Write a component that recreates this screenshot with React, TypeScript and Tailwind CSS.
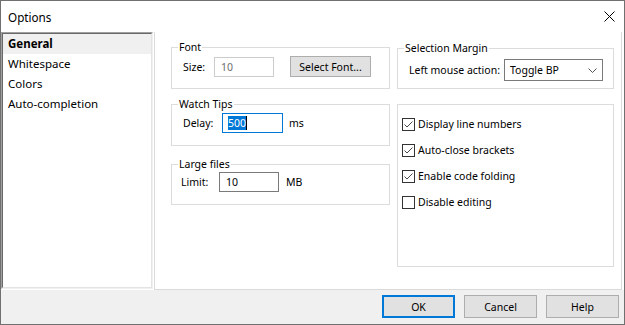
import React from 'react';

const GroupBox: React.FC<{ label?: string; className?: string; children?: React.ReactNode }> = ({ label, className, children }) => (
  <fieldset className={`border border-[#dcdcdc] m-0 p-0 ${className ?? ''}`}>
    {label && <legend className="ml-[6px] px-[1px] leading-[16px]">{label}</legend>}
    {children}
  </fieldset>
);

const Check: React.FC<{ checked?: boolean; label: string }> = ({ checked, label }) => (
  <div className="flex items-center h-[16px]">
    <div className="w-[13px] h-[13px] border border-[#333333] bg-white flex items-center justify-center shrink-0">
      {checked && (
        <svg width="11" height="11" viewBox="0 0 11 11">
          <path d="M1.5 5.5 L4 8 L9.5 2.5" fill="none" stroke="#4a4a4a" strokeWidth="1" />
        </svg>
      )}
    </div>
    <span className="ml-[3px] whitespace-nowrap">{label}</span>
  </div>
);

const Button: React.FC<{ label: string; primary?: boolean }> = ({ label, primary }) => (
  <button
    className={`w-[73px] h-[23px] bg-[#e1e1e1] flex items-center justify-center ${
      primary ? 'border-2 border-[#0078d7]' : 'border border-[#adadad]'
    }`}
  >
    {label}
  </button>
);

export default function App() {
  const items = ['General', 'Whitespace', 'Colors', 'Auto-completion'];

  return (
    <div className="w-[625px] h-[325px] border border-[#707070] bg-white flex flex-col text-[10.5px] text-black font-['Noto_Sans',sans-serif] leading-[16px]">
      {/* title bar */}
      <div className="h-[31px] flex items-center justify-between pl-[7px] pr-[9px] shrink-0">
        <span className="text-[11.7px]">Options</span>
        <svg width="11" height="11" viewBox="0 0 11 11">
          <path d="M0.5 0.5 L10.5 10.5 M10.5 0.5 L0.5 10.5" stroke="#000" strokeWidth="1" />
        </svg>
      </div>

      {/* main area */}
      <div className="h-[258px] flex shrink-0">
        <div className="w-[152px] h-[257px] mr-[1px] border-t border-l border-[#a0a0a0] border-r border-b border-r-[#f0f0f0] border-b-[#f0f0f0]">
          <div className="h-full border-t border-l border-[#696969] border-r border-b border-r-[#e3e3e3] border-b-[#e3e3e3] bg-white text-[11.5px]">
            {items.map((it, i) => (
              <div
                key={it}
                className={`h-[20px] flex items-center pl-[5px] ${i === 0 ? 'bg-[#f0f0f0] font-bold' : ''}`}
              >
                {it}
              </div>
            ))}
          </div>
        </div>

        <div className="w-[468px] h-[258px] border-l border-r border-b border-[#dadada] pl-[16px] pr-[7px] flex gap-[7px]">
          {/* left column */}
          <div className="w-[219px] flex flex-col">
            <GroupBox label="Font" className="mt-[7px] h-[50px]">
              <div className="flex items-center mt-[1px] pl-[11px]">
                <span className="w-[31px]">Size:</span>
                <div className="w-[60px] h-[20px] border border-[#cccccc] flex items-center pl-[6px] text-[#6d6d6d]">10</div>
                <button className="ml-[16px] w-[81px] h-[21px] bg-[#e1e1e1] border border-[#adadad] flex items-center justify-center">
                  Select Font...
                </button>
              </div>
            </GroupBox>

            <GroupBox label="Watch Tips" className="mt-[7px] h-[50px]">
              <div className="flex items-center mt-[1px] pl-[11px]">
                <span className="w-[39px]">Delay:</span>
                <div className="w-[61px] h-[20px] border border-[#0078d7] flex items-center pl-[5px]">
                  <span className="bg-[#0078d7] text-white leading-[14px]">500</span>
                  <span className="w-[1px] h-[14px] bg-black" />
                </div>
                <span className="ml-[6px]">ms</span>
              </div>
            </GroupBox>

            <GroupBox label="Large files" className="mt-[10px] h-[49px]">
              <div className="flex items-center pl-[9px]">
                <span className="w-[38px]">Limit:</span>
                <div className="w-[60px] h-[20px] border border-[#7a7a7a] flex items-center pl-[6px]">10</div>
                <span className="ml-[7px]">MB</span>
              </div>
            </GroupBox>
          </div>

          {/* right column */}
          <div className="w-[217px] flex flex-col">
            <GroupBox label="Selection Margin" className="mt-[8px] h-[49px]">
              <div className="flex items-center mt-[3px] pl-[11px]">
                <span className="w-[95px] shrink-0 whitespace-nowrap">Left mouse action:</span>
                <div className="w-[99px] h-[22px] shrink-0 border border-[#7a7a7a] flex items-center justify-between pl-[5px] pr-[5px]">
                  <span>Toggle BP</span>
                  <svg width="9" height="5" viewBox="0 0 9 5">
                    <path d="M0.5 0.5 L4.5 4.5 L8.5 0.5" fill="none" stroke="#555" strokeWidth="1" />
                  </svg>
                </div>
              </div>
            </GroupBox>

            <div className="mt-[15px] h-[163px] border border-[#dcdcdc] pt-[11px] pl-[4px] flex flex-col gap-[10px]">
              <Check checked label="Display line numbers" />
              <Check checked label="Auto-close brackets" />
              <Check checked label="Enable code folding" />
              <Check label="Disable editing" />
            </div>
          </div>
        </div>
      </div>

      {/* bottom bar */}
      <div className="flex-1 bg-[#f0f0f0] flex justify-end items-start pt-[5px] pr-[5px] gap-[9px]">
        <Button label="OK" primary />
        <Button label="Cancel" />
        <Button label="Help" />
      </div>
    </div>
  );
}
